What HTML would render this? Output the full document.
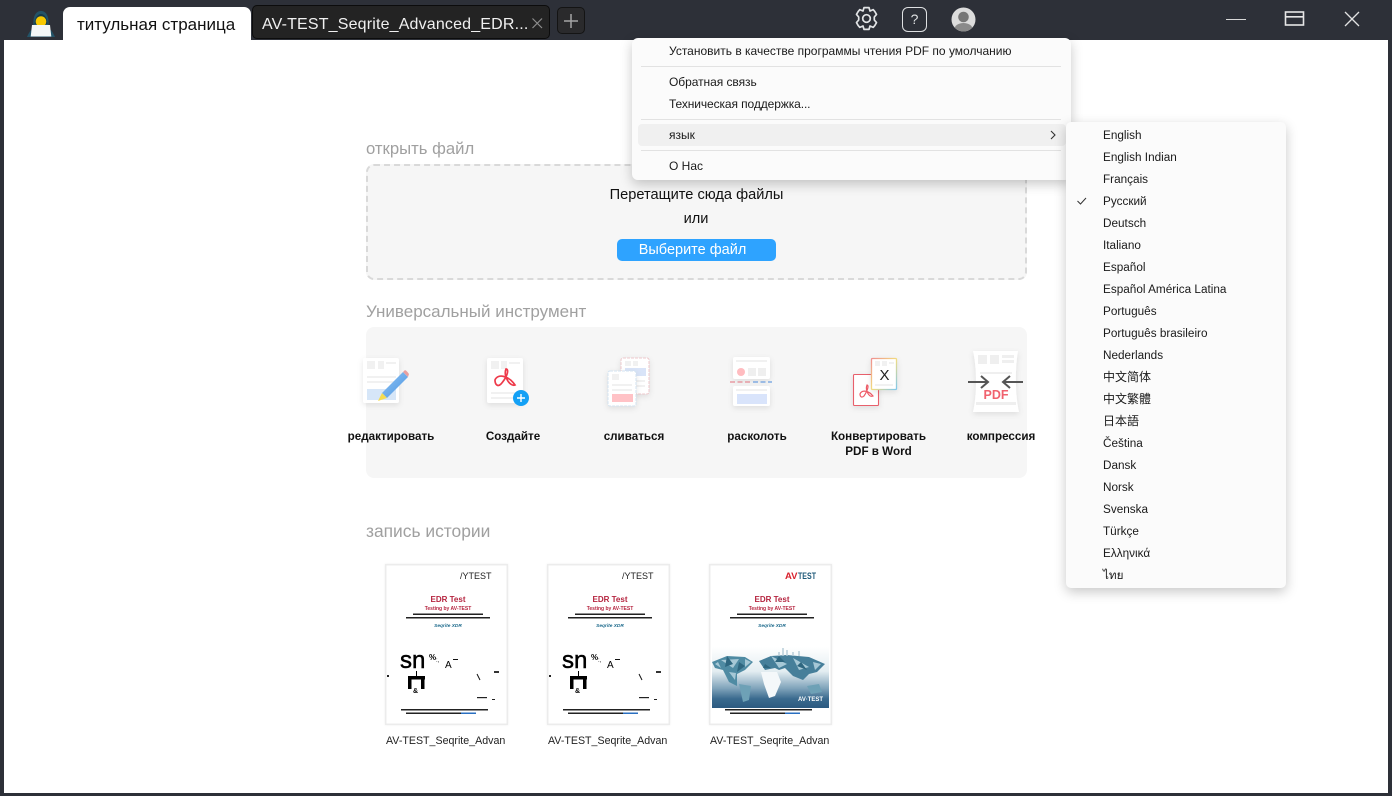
<!DOCTYPE html>
<html lang="ru"><head><meta charset="utf-8"><title>PDF</title>
<style>
html,body{margin:0;padding:0;width:1392px;height:796px;overflow:hidden;background:#2d3038;font-family:"Liberation Sans","Noto Sans CJK SC",sans-serif;}
*{box-sizing:border-box}
.a{position:absolute;white-space:nowrap}
.c{transform:translateX(-50%);text-align:center}
.sec{font-size:17px;color:#a0a0a0;line-height:20px}
.tool{font-size:11.65px;font-weight:bold;color:#111;line-height:15px}
.mi{left:669px;font-size:12px;color:#1a1a1a;line-height:16px}
.sep{left:641px;width:420px;height:1px;background:#e2e2e2}
.li{left:1103px;font-size:11.75px;color:#1a1a1a;line-height:16px}
.cj{font-size:12px}
.fn{font-size:10.65px;color:#222;line-height:14px}
.thumb{position:absolute;top:564px;width:123px;height:161px;background:#fff;box-shadow:inset 0 0 0 1.5px #ececec,0 0 2px rgba(0,0,0,.08)}
</style></head><body>
<!-- page area -->
<div class="a" style="left:4px;top:40px;width:1384px;height:753px;background:#fff"></div>

<!-- logo -->
<svg class="a" style="left:26px;top:8px" width="30" height="32" viewBox="0 0 30 32">
<path d="M1 29 C3 24 6 21 7.5 19 C6.5 8 10 3 15 3 C20 3 23.5 8 22.5 19 C24 21 27 24 29 29Z" fill="#235368"/>
<path d="M8.5 16 C9 9 12 6 15 6 C18 6 21 9 21.5 16Z" fill="#173a48"/>
<circle cx="15" cy="13.5" r="5.3" fill="#f7c800"/>
<path d="M6 17 H24 L25.3 28.5 H4.7Z" fill="#f4f6f6"/>
</svg>

<!-- tabs -->
<div class="a" style="left:63px;top:7px;width:188px;height:33px;background:#fff;border-radius:7px 7px 0 0"></div>
<div class="a" style="left:77px;top:15px;font-size:17px;line-height:20px;color:#111">титульная страница</div>
<div class="a" style="left:252px;top:5px;width:298px;height:34px;background:#232323;border:1.5px solid #0c0c0c;border-radius:5px"></div>
<div class="a" style="left:262px;top:15px;font-size:16px;letter-spacing:.17px;line-height:20px;color:#f0f0f0">AV-TEST_Seqrite_Advanced_EDR...</div>
<svg class="a" style="left:530px;top:16px" width="14" height="14"><path d="M2.5 2.5 L12 12 M12 2.5 L2.5 12" stroke="#8d8d8d" stroke-width="1.2"/></svg>
<div class="a" style="left:557px;top:7px;width:28px;height:27px;background:#2a2a2c;border:1px solid #141414;border-radius:5px"></div>
<svg class="a" style="left:563px;top:13px" width="16" height="16"><path d="M8 1 V15 M1 8 H15" stroke="#a5a5a5" stroke-width="1.5"/></svg>

<!-- top icons -->
<svg class="a" style="left:854px;top:6px" width="25" height="25" viewBox="0 0 25 25" fill="none" stroke="#e2e4e6" stroke-width="1.7" stroke-linejoin="round">
<path d="M10 1.6 H15 L16 5 L19.2 3.6 C20.3 4.6 21.8 7 22.5 8.4 L20.3 11 V14 L22.5 16.6 C21.8 18 20.3 20.4 19.2 21.4 L16 20 L15 23.4 H10 L9 20 L5.8 21.4 C4.7 20.4 3.2 18 2.5 16.6 L4.7 14 V11 L2.5 8.4 C3.2 7 4.7 4.6 5.8 3.6 L9 5Z"/>
<circle cx="12.5" cy="12.5" r="3.8"/></svg>
<div class="a" style="left:902px;top:7px;width:25px;height:25px;border:1.6px solid #dfe1e3;border-radius:6px"></div>
<div class="a c" style="left:914.5px;top:10px;font-size:14px;line-height:18px;color:#dfe1e3">?</div>
<svg class="a" style="left:951px;top:7px" width="25" height="25" viewBox="0 0 25 25">
<defs><clipPath id="av"><circle cx="12.5" cy="12.5" r="12"/></clipPath></defs>
<circle cx="12.5" cy="12.5" r="12" fill="#dcdcdc"/>
<g clip-path="url(#av)"><circle cx="12.5" cy="10" r="5.3" fill="#777"/><ellipse cx="12.5" cy="22" rx="9" ry="6" fill="#8a8a8a"/></g></svg>

<!-- window controls -->
<div class="a" style="left:1226px;top:19px;width:20px;height:1.3px;background:#d8d8d8"></div>
<svg class="a" style="left:1284px;top:10px" width="22" height="17" fill="none" stroke="#e6e6e6" stroke-width="1.6"><rect x="1.5" y="2" width="18" height="13"/><path d="M1.5 6.8 H19.5"/></svg>
<svg class="a" style="left:1343px;top:10px" width="18" height="18" fill="none" stroke="#e2e2e2" stroke-width="1.3"><path d="M2 2 L16 16 M16 2 L2 16"/></svg>

<!-- open file -->
<div class="a sec" style="left:366px;top:139px;font-size:16.7px">открыть файл</div>
<div class="a" style="left:366px;top:164px;width:661px;height:116px;background:#f6f6f6;border:2px dashed #d9d9d9;border-radius:8px"></div>
<div class="a c" style="left:696.5px;top:186px;font-size:14.6px;line-height:18px;color:#111">Перетащите сюда файлы</div>
<div class="a c" style="left:696px;top:210px;font-size:14.6px;line-height:18px;color:#111">или</div>
<div class="a" style="left:617px;top:239px;width:159px;height:22px;background:#2ea3ff;border-radius:5px"></div>
<div class="a c" style="left:692.5px;top:240px;color:#fff;font-size:14.5px;line-height:21px">Выберите файл</div>

<!-- tools -->
<div class="a sec" style="left:366px;top:302px">Универсальный инструмент</div>
<div class="a" style="left:366px;top:327px;width:661px;height:151px;background:#f6f6f6;border-radius:8px"></div>
<svg class="a" style="left:0;top:340px" width="1060" height="80" viewBox="0 340 1060 80">
<defs>
<filter id="sh" x="-30%" y="-30%" width="160%" height="160%"><feDropShadow dx="0" dy="2" stdDeviation="3" flood-color="#000" flood-opacity=".1"/></filter>
<linearGradient id="pen" x1="0" y1="0" x2="1" y2="1"><stop offset="0" stop-color="#8fc4f2"/><stop offset="1" stop-color="#4c95e4"/></linearGradient>
<linearGradient id="rb" x1="0" y1="0" x2="1" y2="1"><stop offset="0" stop-color="#f09090"/><stop offset=".5" stop-color="#f2dc80"/><stop offset="1" stop-color="#80c8ec"/></linearGradient>
</defs>
<!-- edit -->
<g filter="url(#sh)"><rect x="363" y="358" width="36" height="45" rx="2" fill="#fff"/></g>
<g fill="#f1f1f1"><rect x="367" y="361" width="8" height="8"/><rect x="378" y="361" width="6" height="8"/><rect x="386" y="362" width="10" height="2"/><rect x="367" y="376" width="29" height="2"/><rect x="367" y="381" width="29" height="2"/></g>
<rect x="367" y="389" width="29" height="11" fill="#d6e6f8"/>
<path d="M382 393 L403 372 L408 377 L387 398Z" fill="url(#pen)"/>
<path d="M403 372 L405 370 Q407 371 409 374 L408 377Z" fill="#e8a0a0"/>
<path d="M382 393 L387 398 L378 401Z" fill="#f5dc50"/>
<!-- create -->
<g filter="url(#sh)"><rect x="487" y="358" width="36" height="45" rx="2" fill="#fff"/></g>
<g fill="#f1f1f1"><rect x="491" y="361" width="8" height="8"/><rect x="501" y="361" width="6" height="8"/><rect x="509" y="362" width="11" height="2"/><rect x="491" y="392" width="24" height="2"/><rect x="491" y="397" width="24" height="2"/></g>
<path d="M495 380 C498 373 509 376 515 385 C510 387 503 376 506 369 C509 369 508 376 501 384 C498 387 495 385 495 380Z" fill="none" stroke="#ee3a4a" stroke-width="1.7"/>
<circle cx="521" cy="398" r="8" fill="#13a0f5"/>
<path d="M517 398 H525 M521 394 V402" stroke="#fff" stroke-width="1.4"/>
<!-- merge -->
<g filter="url(#sh)"><rect x="621" y="358" width="28" height="36" rx="2" fill="#fff" stroke="#eec8cc" stroke-dasharray="3 1"/></g>
<g fill="#f1f1f1"><rect x="625" y="361" width="6" height="5"/><rect x="633" y="361" width="5" height="5"/><rect x="625" y="380" width="20" height="2"/><rect x="625" y="385" width="20" height="2"/></g>
<rect x="625" y="368" width="21" height="8" fill="#d9e4f8"/>
<g filter="url(#sh)"><rect x="608" y="371" width="28" height="35" rx="2" fill="#fff" stroke="#d3e3f1" stroke-dasharray="3 1"/></g>
<g fill="#f1f1f1"><rect x="612" y="374" width="7" height="6"/><rect x="612" y="384" width="20" height="2"/><rect x="612" y="389" width="20" height="2"/></g>
<rect x="612" y="394" width="21" height="8" fill="#ffc2c6"/>
<!-- split -->
<g filter="url(#sh)"><rect x="733" y="357" width="37" height="22" rx="2" fill="#fff"/><rect x="733" y="386" width="37" height="20" rx="2" fill="#fff"/></g>
<rect x="736" y="360" width="31" height="2" fill="#f1f1f1"/>
<circle cx="741" cy="372" r="4" fill="#ffbcc0"/><rect x="748" y="368" width="8" height="8" fill="#efefef"/><rect x="758" y="368" width="8" height="8" fill="#efefef"/>
<path d="M730 382 H751" stroke="#e58a94" stroke-width="1.3" stroke-dasharray="5 2.5"/>
<path d="M753 382 H772" stroke="#6c9fe0" stroke-width="1.3" stroke-dasharray="5 2.5"/>
<rect x="737" y="394" width="30" height="10" fill="#d9e4fb"/>
<rect x="736" y="389" width="31" height="2" fill="#f1f1f1"/>
<!-- convert -->
<g filter="url(#sh)"><rect x="853.5" y="374.5" width="25" height="31" rx="1" fill="#fff" stroke="#e8606c" stroke-width="1.1"/></g>
<path d="M860 394 C862 389 869 391 873 396 C869 398 865 390 867 385 C869 385 868 390 864 396 C862 398 860 397 860 394Z" fill="none" stroke="#ee5a66" stroke-width="1.2"/>
<g filter="url(#sh)"><rect x="871.5" y="358.5" width="25" height="31" rx="1" fill="#fff" stroke="url(#rb)" stroke-width="1.3"/></g>
<g fill="#f1f1f1"><rect x="875" y="361" width="5" height="5"/><rect x="882" y="361" width="5" height="5"/><rect x="889" y="362" width="5" height="2"/><rect x="875" y="384" width="18" height="2"/></g>
<text x="884.5" y="380" text-anchor="middle" font-family="Liberation Sans" font-size="15" fill="#222">X</text>
<!-- compress -->
<g filter="url(#sh)"><path d="M973 351 H1018 C1015 368 1015 395 1019 412 H973 C977 395 977 368 973 351Z" fill="#fff"/></g>
<g fill="#efefef"><rect x="978" y="355" width="9" height="9"/><rect x="990" y="355" width="9" height="9"/><rect x="1002" y="355" width="12" height="3"/><rect x="1002" y="360" width="12" height="3"/><rect x="980" y="372" width="32" height="2"/><rect x="976" y="402" width="40" height="3"/></g>
<path d="M968 382 H987 M981 376 L988 382 L981 388" fill="none" stroke="#555" stroke-width="2"/>
<path d="M1023 382 H1004 M1010 376 L1003 382 L1010 388" fill="none" stroke="#555" stroke-width="2"/>
<text x="996" y="399" text-anchor="middle" font-family="Liberation Sans" font-size="12.5" font-weight="bold" fill="#f0626e">PDF</text>
</svg>
<div class="a c tool" style="left:391px;top:429px">редактировать</div>
<div class="a c tool" style="left:513px;top:429px">Создайте</div>
<div class="a c tool" style="left:634px;top:429px">сливаться</div>
<div class="a c tool" style="left:757px;top:429px">расколоть</div>
<div class="a c tool" style="left:878.5px;top:429px">Конвертировать<br>PDF в Word</div>
<div class="a c tool" style="left:1001px;top:429px">компрессия</div>

<!-- history -->
<div class="a sec" style="left:366px;top:521px;font-size:17.4px">запись истории</div>

<div class="thumb" style="left:385px">
<svg width="123" height="161" viewBox="0 0 123 161" font-family="Liberation Sans">
<text x="75" y="15" font-size="9" fill="#222">/YTEST</text>
<text x="63" y="38" text-anchor="middle" font-size="8" font-weight="bold" fill="#b5243f">EDR Test</text>
<text x="63" y="46" text-anchor="middle" font-size="5" font-weight="bold" fill="#b5243f">Testing by AV-TEST</text>
<rect x="28" y="49.5" width="70" height="1.5" fill="#222"/><rect x="21" y="53" width="84" height="1.5" fill="#222"/>
<text x="63" y="63" text-anchor="middle" font-size="4.8" font-weight="bold" font-style="italic" fill="#1d6a8c">Seqrite XDR</text>
<text x="15" y="104" font-size="24" stroke="#000" stroke-width=".5">sn</text>
<text x="44" y="96" font-size="8" font-weight="bold">%</text><text x="51" y="98" font-size="6">:,</text>
<text x="60" y="104" font-size="10">A</text><rect x="68" y="95" width="5" height="1" fill="#111"/>
<rect x="23" y="113" width="3.5" height="12"/><rect x="36" y="113" width="3.5" height="12"/><rect x="23" y="112" width="17" height="3.5"/><rect x="31" y="107" width="1" height="6"/>
<text x="28" y="129" font-size="7" font-weight="bold">&amp;</text>
<rect x="2" y="111" width="2" height="2" fill="#222"/>
<path d="M92 110 L95 116" stroke="#111"/>
<rect x="109" y="107" width="5" height="2" fill="#333"/>
<rect x="92" y="133" width="10" height="1.2" fill="#222"/><rect x="107" y="135" width="3" height="1" fill="#222"/>
<rect x="16" y="145" width="87" height="1.5" fill="#222"/><rect x="21" y="148.5" width="55" height="1.5" fill="#222"/><rect x="76" y="148.5" width="15" height="1.5" fill="#2a6fc0"/>
</svg></div>

<div class="thumb" style="left:547px">
<svg width="123" height="161" viewBox="0 0 123 161" font-family="Liberation Sans">
<text x="75" y="15" font-size="9" fill="#222">/YTEST</text>
<text x="63" y="38" text-anchor="middle" font-size="8" font-weight="bold" fill="#b5243f">EDR Test</text>
<text x="63" y="46" text-anchor="middle" font-size="5" font-weight="bold" fill="#b5243f">Testing by AV-TEST</text>
<rect x="28" y="49.5" width="70" height="1.5" fill="#222"/><rect x="21" y="53" width="84" height="1.5" fill="#222"/>
<text x="63" y="63" text-anchor="middle" font-size="4.8" font-weight="bold" font-style="italic" fill="#1d6a8c">Seqrite XDR</text>
<text x="15" y="104" font-size="24" stroke="#000" stroke-width=".5">sn</text>
<text x="44" y="96" font-size="8" font-weight="bold">%</text><text x="51" y="98" font-size="6">:,</text>
<text x="60" y="104" font-size="10">A</text><rect x="68" y="95" width="5" height="1" fill="#111"/>
<rect x="23" y="113" width="3.5" height="12"/><rect x="36" y="113" width="3.5" height="12"/><rect x="23" y="112" width="17" height="3.5"/><rect x="31" y="107" width="1" height="6"/>
<text x="28" y="129" font-size="7" font-weight="bold">&amp;</text>
<rect x="2" y="111" width="2" height="2" fill="#222"/>
<path d="M92 110 L95 116" stroke="#111"/>
<rect x="109" y="107" width="5" height="2" fill="#333"/>
<rect x="92" y="133" width="10" height="1.2" fill="#222"/><rect x="107" y="135" width="3" height="1" fill="#222"/>
<rect x="16" y="145" width="87" height="1.5" fill="#222"/><rect x="21" y="148.5" width="55" height="1.5" fill="#222"/><rect x="76" y="148.5" width="15" height="1.5" fill="#2a6fc0"/>
</svg></div>

<div class="thumb" style="left:709px">
<svg width="123" height="161" viewBox="0 0 123 161" font-family="Liberation Sans">
<defs><linearGradient id="bl" x1="0" y1="0" x2="0" y2="1"><stop offset="0" stop-color="#fff"/><stop offset=".4" stop-color="#e3edf1"/><stop offset=".68" stop-color="#7fa3ba"/><stop offset=".85" stop-color="#3a6a8e"/><stop offset="1" stop-color="#2c5a80"/></linearGradient></defs>
<text x="76" y="15" font-size="9.5" font-weight="bold" fill="#d8232f">AV</text><text x="89" y="15" font-size="9.5" font-weight="bold" textLength="18" lengthAdjust="spacingAndGlyphs" fill="#1f5a7a">TEST</text>
<text x="63" y="38" text-anchor="middle" font-size="8" font-weight="bold" fill="#b5243f">EDR Test</text>
<text x="63" y="46" text-anchor="middle" font-size="5" font-weight="bold" fill="#b5243f">Testing by AV-TEST</text>
<rect x="28" y="49.5" width="70" height="1.5" fill="#222"/><rect x="21" y="53" width="84" height="1.5" fill="#222"/>
<text x="63" y="63" text-anchor="middle" font-size="4.8" font-weight="bold" font-style="italic" fill="#1d6a8c">Seqrite XDR</text>
<rect x="3" y="83" width="117" height="61" fill="url(#bl)"/>
<path d="M3 98 L18 92 L36 93 L44 98 L36 106 L28 110 L28 122 L20 118 L14 106 L6 104Z" fill="#4f8ba3"/>
<path d="M30 120 L42 122 L40 136 L34 138Z" fill="#6ea1b6"/>
<path d="M50 97 L62 92 L78 91 L100 93 L116 100 L108 108 L100 110 L94 116 L84 112 L76 104 L70 106 L66 104 L56 106Z" fill="#467f9a"/>
<path d="M52 108 L68 108 L72 118 L66 132 L60 134 L55 120Z" fill="#f4f8fa"/>
<path d="M98 122 L110 120 L113 128 L102 130Z" fill="#6ea1b6"/>
<path d="M62 92 L78 100 L70 104Z M84 94 L100 103 L90 106Z M12 96 L24 104 L30 95Z M6 100 L12 104 L9 98Z M36 95 L42 98 L36 103Z M20 108 L27 109 L26 116Z M104 98 L112 100 L106 106Z" fill="#a6c8d6"/>
<path d="M18 92 L24 100 L16 103Z M30 98 L36 102 L28 108Z M70 92 L76 98 L66 98Z M92 98 L98 106 L88 102Z M56 100 L62 104 L54 104Z" fill="#2f6780"/>
<path d="M70 88 V92 M74 84 V92 M78 86 V92 M84 88 V92 M90 87 V92" stroke="#b3cad6" stroke-width="1.4"/>
<text x="89" y="137" font-size="6.5" font-weight="bold" textLength="25" lengthAdjust="spacingAndGlyphs" fill="#fff">AV·TEST</text>
<rect x="16" y="145" width="87" height="1.5" fill="#222"/><rect x="21" y="148.5" width="55" height="1.5" fill="#222"/><rect x="76" y="148.5" width="15" height="1.5" fill="#2a6fc0"/>
</svg></div>

<div class="a fn" style="left:386px;top:734px">AV-TEST_Seqrite_Advan</div>
<div class="a fn" style="left:548px;top:734px">AV-TEST_Seqrite_Advan</div>
<div class="a fn" style="left:710px;top:734px">AV-TEST_Seqrite_Advan</div>

<!-- context menu -->
<div class="a" style="left:632px;top:38px;width:439px;height:142px;background:#fbfbfb;border-radius:6px;box-shadow:0 4px 12px rgba(0,0,0,.22)"></div>
<div class="a mi" style="top:43px">Установить в качестве программы чтения PDF по умолчанию</div>
<div class="a sep" style="top:66px"></div>
<div class="a mi" style="top:74px;letter-spacing:-.05px">Обратная связь</div>
<div class="a mi" style="top:96px;letter-spacing:-.1px">Техническая поддержка...</div>
<div class="a sep" style="top:119px"></div>
<div class="a" style="left:638px;top:124px;width:428px;height:22px;background:#f0f0f0;border-radius:4px"></div>
<div class="a mi" style="top:127px">язык</div>
<svg class="a" style="left:1048px;top:130px" width="10" height="10" fill="none" stroke="#333" stroke-width="1.1"><path d="M3 1 L7 5 L3 9"/></svg>
<div class="a sep" style="top:150px"></div>
<div class="a mi" style="top:158px">О Нас</div>

<!-- submenu -->
<div class="a" style="left:1066px;top:122px;width:220px;height:466px;background:#fbfbfb;border-radius:5px;box-shadow:0 4px 12px rgba(0,0,0,.22)"></div>
<div class="a li" style="top:128px">English</div>
<div class="a li" style="top:150px">English Indian</div>
<div class="a li" style="top:172px">Français</div>
<svg class="a" style="left:1076px;top:196px" width="11" height="10" fill="none" stroke="#333" stroke-width="1"><path d="M1.5 5 L4.5 8 L10 2"/></svg>
<div class="a li" style="top:194px">Русский</div>
<div class="a li" style="top:216px">Deutsch</div>
<div class="a li" style="top:238px">Italiano</div>
<div class="a li" style="top:260px">Español</div>
<div class="a li" style="top:282px">Español América Latina</div>
<div class="a li" style="top:304px">Português</div>
<div class="a li" style="top:326px">Português brasileiro</div>
<div class="a li" style="top:348px">Nederlands</div>
<div class="a li cj" style="top:369px">中文简体</div>
<div class="a li cj" style="top:391px">中文繁體</div>
<div class="a li cj" style="top:413px">日本語</div>
<div class="a li" style="top:436px">Čeština</div>
<div class="a li" style="top:458px">Dansk</div>
<div class="a li" style="top:480px">Norsk</div>
<div class="a li" style="top:502px">Svenska</div>
<div class="a li" style="top:524px">Türkçe</div>
<div class="a li" style="top:546px">Ελληνικά</div>
<div class="a li" style="top:568px">ไทย</div>
</body></html>
